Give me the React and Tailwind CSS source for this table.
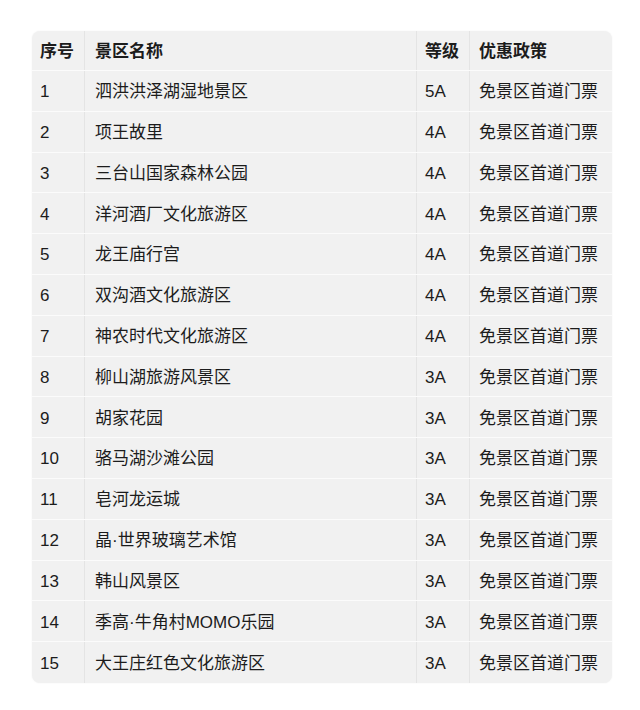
import React from "react";

const rows = [
  ["1", "泗洪洪泽湖湿地景区", "5A"],
  ["2", "项王故里", "4A"],
  ["3", "三台山国家森林公园", "4A"],
  ["4", "洋河酒厂文化旅游区", "4A"],
  ["5", "龙王庙行宫", "4A"],
  ["6", "双沟酒文化旅游区", "4A"],
  ["7", "神农时代文化旅游区", "4A"],
  ["8", "柳山湖旅游风景区", "3A"],
  ["9", "胡家花园", "3A"],
  ["10", "骆马湖沙滩公园", "3A"],
  ["11", "皂河龙运城", "3A"],
  ["12", "晶·世界玻璃艺术馆", "3A"],
  ["13", "韩山风景区", "3A"],
  ["14", "季高·牛角村MOMO乐园", "3A"],
  ["15", "大王庄红色文化旅游区", "3A"],
];

const font = { fontFamily: '"Liberation Sans", "Noto Sans CJK SC", sans-serif' };

export default function App() {
  return (
    <div className="w-[640px] h-[710px] bg-white pt-[31px] pl-[32px]" style={font}>
      <div className="w-[580px] rounded-[8px] overflow-hidden bg-[#f1f1f1] shadow-[0_0_2px_rgba(0,0,0,0.06)] text-[17px] text-[#1c1c1c]">
        <div className="flex h-[40px] font-bold border-b border-[#fbfbfb]">
          <div className="w-[53px] pl-[8px] pt-[2px] flex items-center border-r border-[#e4e4e4]">序号</div>
          <div className="w-[332px] pl-[10px] pt-[2px] flex items-center border-r border-[#e4e4e4]">景区名称</div>
          <div className="w-[53px] pl-[8px] pt-[2px] flex items-center border-r border-[#e4e4e4]">等级</div>
          <div className="flex-1 pl-[9px] pt-[2px] flex items-center">优惠政策</div>
        </div>
        {rows.map((r, i) => (
          <div
            key={r[0]}
            className={
              "flex h-[40.8px] " + (i < rows.length - 1 ? "border-b border-[#fbfbfb]" : "")
            }
          >
            <div className="w-[53px] pl-[8px] pt-[2px] flex items-center border-r border-[#e4e4e4]">{r[0]}</div>
            <div className="w-[332px] pl-[10px] pt-[2px] flex items-center border-r border-[#e4e4e4]">{r[1]}</div>
            <div className="w-[53px] pl-[8px] pt-[2px] flex items-center border-r border-[#e4e4e4]">{r[2]}</div>
            <div className="flex-1 pl-[9px] pt-[2px] flex items-center">免景区首道门票</div>
          </div>
        ))}
      </div>
    </div>
  );
}
